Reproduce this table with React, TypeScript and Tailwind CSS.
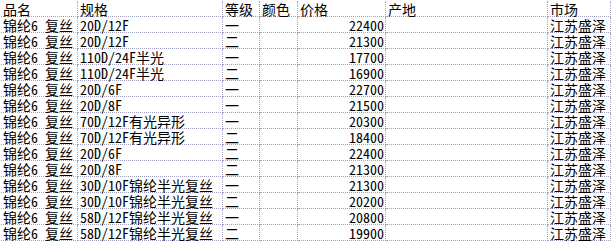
const rows: [string, string, string, string][] = [
  ['20D/12F', '一', '22400', '江苏盛泽'],
  ['20D/12F', '二', '21300', '江苏盛泽'],
  ['110D/24F半光', '一', '17700', '江苏盛泽'],
  ['110D/24F半光', '二', '16900', '江苏盛泽'],
  ['20D/6F', '一', '22700', '江苏盛泽'],
  ['20D/8F', '一', '21500', '江苏盛泽'],
  ['70D/12F有光异形', '一', '20300', '江苏盛泽'],
  ['70D/12F有光异形', '二', '18400', '江苏盛泽'],
  ['20D/6F', '二', '22400', '江苏盛泽'],
  ['20D/8F', '二', '21300', '江苏盛泽'],
  ['30D/10F锦纶半光复丝', '一', '21300', '江苏盛泽'],
  ['30D/10F锦纶半光复丝', '二', '20200', '江苏盛泽'],
  ['58D/12F锦纶半光复丝', '一', '20800', '江苏盛泽'],
  ['58D/12F锦纶半光复丝', '二', '19900', '江苏盛泽'],
]

const cell = 'h-4 whitespace-pre border-r border-b border-dotted border-[#a0a0c4] pl-[2px] leading-4'

export default function App() {
  return (
    <div
      className="h-[241px] w-[611px] overflow-hidden bg-white pt-[1px] pl-[1px] text-[14px] text-black"
      style={{ fontFamily: '"Noto Sans Mono CJK SC", "Noto Sans CJK SC", "Liberation Mono", monospace' }}
    >
      <div className="grid grid-cols-[77px_145px_37px_38px_88px_162px_63px]">
        <div className={cell}>品名</div>
        <div className={cell}>规格</div>
        <div className={cell}>等级</div>
        <div className={cell}>颜色</div>
        <div className={cell}>价格</div>
        <div className={cell}>产地</div>
        <div className={cell}>市场</div>
        {rows.map(([spec, grade, price, market], i) => (
          <div key={i} className="contents">
            <div className={cell}>锦纶6 复丝</div>
            <div className={cell}>{spec}</div>
            <div className={cell}>{grade}</div>
            <div className={cell}></div>
            <div className={`${cell} pr-[1px] text-right`}>{price}</div>
            <div className={cell}></div>
            <div className={cell}>{market}</div>
          </div>
        ))}
      </div>
    </div>
  )
}
